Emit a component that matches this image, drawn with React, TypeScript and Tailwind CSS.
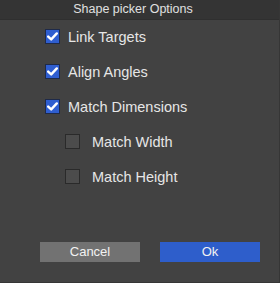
import React from "react";

const font = { fontFamily: '"Liberation Sans", Arial, sans-serif' };

function Box({ checked }: { checked: boolean }) {
  if (checked) {
    return (
      <div className="flex h-[15px] w-[15px] items-center justify-center border border-[#1e2a4a] bg-[#2f5ed0]">
        <svg width="11" height="9" viewBox="0 0 11 9">
          <path d="M1.2 4.6 L4.2 7.4 L9.8 1.4" fill="none" stroke="#ffffff" strokeWidth="2.4" strokeLinecap="round" strokeLinejoin="round" />
        </svg>
      </div>
    );
  }
  return <div className="h-[15px] w-[15px] border border-[#2a2a2a] bg-[#4c4c4c]" />;
}

function Row({ label, checked, indent }: { label: string; checked: boolean; indent?: boolean }) {
  return (
    <div className={`flex h-[15px] items-center ${indent ? "pl-[65px]" : "pl-[45px]"}`}>
      <Box checked={checked} />
      <span className={`translate-y-[1px] text-[14.5px] leading-none text-[#e6e6e6] ${indent ? "ml-[12px]" : "ml-[8px]"}`}>{label}</span>
    </div>
  );
}

export default function App() {
  return (
    <div style={font} className="flex h-[283px] w-[280px] flex-col bg-[#424242] border-r border-b border-[#363636]">
      <div className="flex h-[20px] items-center justify-center border-b border-[#2f2f2f] bg-[#343434] pr-[13px] text-[12.5px] text-[#e0e0e0]">
        Shape picker Options
      </div>
      <div className="flex flex-col gap-[20px] pt-[9px]">
        <Row label="Link Targets" checked />
        <Row label="Align Angles" checked />
        <Row label="Match Dimensions" checked />
        <Row label="Match Width" checked={false} indent />
        <Row label="Match Height" checked={false} indent />
      </div>
      <div className="mt-[58px] flex gap-[20px] pl-[40px]">
        <button className="h-[20px] w-[100px] bg-[#727272] text-[13px] text-[#f2f2f2]">Cancel</button>
        <button className="h-[20px] w-[100px] bg-[#2e5ecb] text-[13px] text-[#f2f2f2]">Ok</button>
      </div>
    </div>
  );
}
